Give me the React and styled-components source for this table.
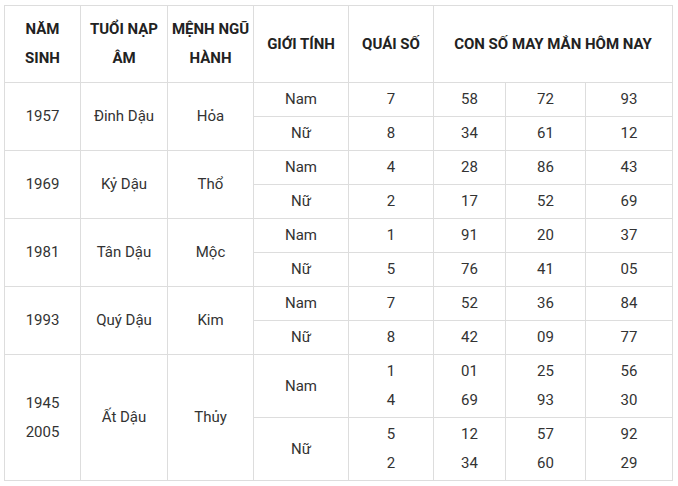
import React from "react";
import styled, { createGlobalStyle } from "styled-components";

const GlobalStyle = createGlobalStyle`
  html, body { margin: 0; padding: 0; background: #fff; }
  body { font-family: Roboto, "Liberation Sans", sans-serif; }
`;

const Wrapper = styled.div`
  padding: 5px 0 0 4px;
`;

const Table = styled.table`
  border-collapse: collapse;
  table-layout: fixed;
  width: 668px;
  color: #333;
  font-size: 15px;
`;

const HeadCell = styled.th`
  border: 1px solid #ddd;
  height: 76px;
  padding: 0;
  font-weight: 700;
  color: #222;
  line-height: 29px;
  text-align: center;
  vertical-align: middle;
  white-space: nowrap;
`;

const Cell = styled.td`
  border: 1px solid #ddd;
  height: ${(p) => (p.$double ? "62px" : "33px")};
  padding: 0 4px;
  line-height: 29px;
  text-align: center;
  vertical-align: middle;
`;

const widths = [76, 87, 86, 95, 85, 72, 80, 87];

const groups = [
  {
    year: ["1957"],
    tuoi: "Đinh Dậu",
    menh: "Hỏa",
    rows: [
      { gt: "Nam", qs: ["7"], nums: [["58"], ["72"], ["93"]] },
      { gt: "Nữ", qs: ["8"], nums: [["34"], ["61"], ["12"]] },
    ],
  },
  {
    year: ["1969"],
    tuoi: "Kỷ Dậu",
    menh: "Thổ",
    rows: [
      { gt: "Nam", qs: ["4"], nums: [["28"], ["86"], ["43"]] },
      { gt: "Nữ", qs: ["2"], nums: [["17"], ["52"], ["69"]] },
    ],
  },
  {
    year: ["1981"],
    tuoi: "Tân Dậu",
    menh: "Mộc",
    rows: [
      { gt: "Nam", qs: ["1"], nums: [["91"], ["20"], ["37"]] },
      { gt: "Nữ", qs: ["5"], nums: [["76"], ["41"], ["05"]] },
    ],
  },
  {
    year: ["1993"],
    tuoi: "Quý Dậu",
    menh: "Kim",
    rows: [
      { gt: "Nam", qs: ["7"], nums: [["52"], ["36"], ["84"]] },
      { gt: "Nữ", qs: ["8"], nums: [["42"], ["09"], ["77"]] },
    ],
  },
  {
    year: ["1945", "2005"],
    tuoi: "Ất Dậu",
    menh: "Thủy",
    rows: [
      { gt: "Nam", qs: ["1", "4"], nums: [["01", "69"], ["25", "93"], ["56", "30"]] },
      { gt: "Nữ", qs: ["5", "2"], nums: [["12", "34"], ["57", "60"], ["92", "29"]] },
    ],
  },
];

const Lines = ({ items }) =>
  items.map((t, i) => (
    <React.Fragment key={i}>
      {i > 0 && <br />}
      {t}
    </React.Fragment>
  ));

export default function App() {
  return (
    <Wrapper>
      <GlobalStyle />
      <Table>
        <colgroup>
          {widths.map((w, i) => (
            <col key={i} style={{ width: w }} />
          ))}
        </colgroup>
        <thead>
          <tr>
            <HeadCell>NĂM<br />SINH</HeadCell>
            <HeadCell>TUỔI NẠP<br />ÂM</HeadCell>
            <HeadCell>MỆNH NGŨ<br />HÀNH</HeadCell>
            <HeadCell>GIỚI TÍNH</HeadCell>
            <HeadCell>QUÁI SỐ</HeadCell>
            <HeadCell colSpan={3}>CON SỐ MAY MẮN HÔM NAY</HeadCell>
          </tr>
        </thead>
        <tbody>
          {groups.map((g, gi) =>
            g.rows.map((r, ri) => {
              const double = r.qs.length > 1;
              return (
                <tr key={`${gi}-${ri}`}>
                  {ri === 0 && (
                    <>
                      <Cell rowSpan={2}><Lines items={g.year} /></Cell>
                      <Cell rowSpan={2}>{g.tuoi}</Cell>
                      <Cell rowSpan={2}>{g.menh}</Cell>
                    </>
                  )}
                  <Cell $double={double}>{r.gt}</Cell>
                  <Cell $double={double}><Lines items={r.qs} /></Cell>
                  {r.nums.map((n, ni) => (
                    <Cell key={ni} $double={double}><Lines items={n} /></Cell>
                  ))}
                </tr>
              );
            })
          )}
        </tbody>
      </Table>
    </Wrapper>
  );
}
